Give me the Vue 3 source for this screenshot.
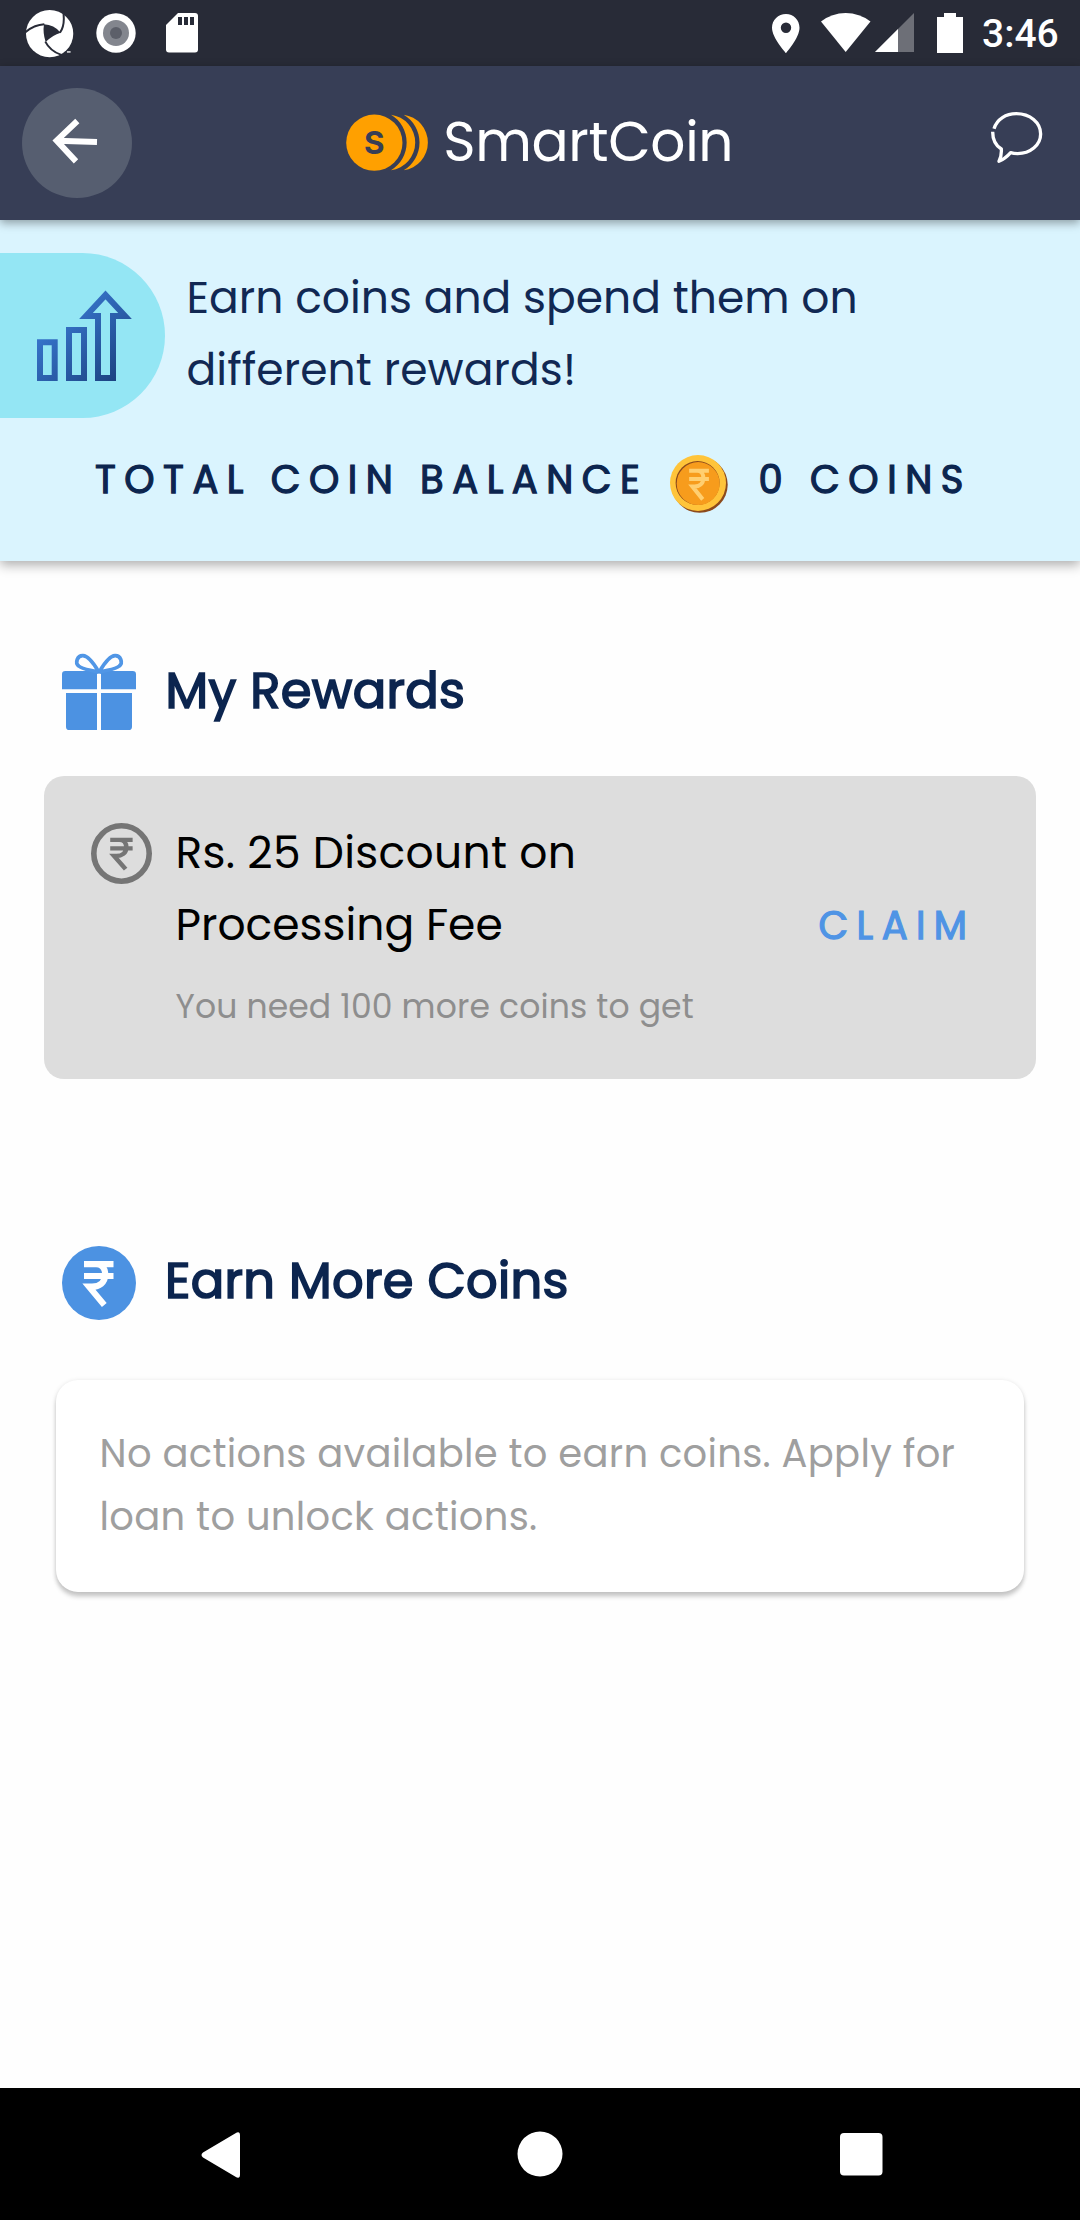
<script setup>
const rupee = 'M22 18.2H51.5M22 30H51.5M31 18.2H34C41 18.2 43.2 24 43.2 28.5C43.2 37 37 40.7 30 40.7H27L42.3 59'
</script>

<template>
  <div class="screen">
    <div class="status">
      <svg class="aperture" viewBox="78 29 143 143">
        <circle cx="149" cy="100" r="71" fill="#fff" />
        <path d="M132 72Q162 73 182 97Q158 104 137 125Q128 98 132 72Z" fill="#282b37" />
        <path d="M180 97Q196 76 190 34M133 72Q102 74 76 96M136 124Q150 152 184 164" fill="none" stroke="#282b37" stroke-width="6" />
        <path d="M201 155h11" stroke="#fff" stroke-width="4" />
      </svg>
      <svg class="record" viewBox="0 0 40 40">
        <circle cx="20" cy="20" r="19.7" fill="#fff" />
        <circle cx="20" cy="20" r="13" fill="#83868e" />
        <circle cx="20" cy="20" r="6" fill="#5c5f69" />
      </svg>
      <svg class="sd" viewBox="0 0 32 40">
        <path d="M12 0H29Q32 0 32 3V36.500Q32 39.500 29 39.500H3Q0 39.500 0 36.500V12Z" fill="#fff" />
        <path d="M12 4h4v8h-4zM18 4h4v8h-4zM24 4h4v8h-4z" fill="#282b37" />
      </svg>
      <span class="spacer"></span>
      <svg class="pin" viewBox="0 0 28 39">
        <path fill-rule="evenodd" d="M14 0C6.200 0 0 6.100 0 13.700C0 24 14 39 14 39S27.500 24 27.500 13.700C27.500 6.100 21.500 0 14 0ZM14 8.500a5.200 5.200 0 1 1 0 10.400a5.200 5.200 0 1 1 0-10.400Z" fill="#fff" />
      </svg>
      <svg class="wifi" viewBox="0 0 50 39">
        <path d="M0 8.500Q11 0 24.700 0T49.500 8.500L24.700 39Z" fill="#fff" />
      </svg>
      <svg class="signal" viewBox="0 0 39 39">
        <path d="M39 0V39H0Z" fill="#fff" opacity=".32" />
        <path d="M23 16V39H0Z" fill="#fff" />
      </svg>
      <svg class="battery" viewBox="0 0 26 40">
        <path d="M7 0H19V4H26V40H0V4H7Z" fill="#fff" />
      </svg>
      <span class="time">3:46</span>
    </div>

    <header class="bar">
      <div class="back">
        <svg viewBox="66 264 330 330">
          <path d="M291 426L172 422M232 363L170 422L228 484" fill="none" stroke="#fff" stroke-width="18" />
        </svg>
      </div>
      <svg class="logo" viewBox="49 103 249 172">
        <g fill="#ffa000">
          <circle cx="134" cy="189" r="84.500" />
          <path d="M184 105A84.300 84.300 0 0 1 184 272A97.700 97.700 0 0 0 184 105Z" />
          <path d="M222 105A84.300 84.300 0 0 1 222 272A97 97 0 0 0 222 105Z" />
        </g>
        <text x="134" y="222" class="logo-s">S</text>
      </svg>
      <span class="brand">SmartCoin</span>
      <svg class="chat" viewBox="750 333 160 160">
        <path d="M762 386C771 357 798 341 829 341C870 341 902 368 902 402C902 436 870 461 833 461C825 461 818 460 812 458C803 468 790 479 777 484C783 472 785 460 784 447C768 437 758 420 758 395" fill="none" stroke="#fff" stroke-width="10" stroke-linejoin="round" />
      </svg>
    </header>

    <section class="banner">
      <div class="promo">
        <div class="pill">
          <svg viewBox="0 253 165 165">
            <defs>
              <linearGradient id="growth" gradientUnits="userSpaceOnUse" x1="45" y1="315" x2="110" y2="385">
                <stop offset="0" stop-color="#3a7bd5" />
                <stop offset="1" stop-color="#1c4382" />
              </linearGradient>
            </defs>
            <path d="M40 342.200H54.700V378H40ZM69 330H84V378H69ZM98 316V378H113V316H125L105.500 295L86 316Z" fill="none" stroke="url(#growth)" stroke-width="6" />
          </svg>
        </div>
        <div class="promo-text">
          <div>Earn coins and spend them on</div>
          <div class="second">different rewards!</div>
        </div>
      </div>
      <div class="balance">
        <span class="label">TOTAL COIN BALANCE</span>
        <svg class="coin" viewBox="0 0 58 58">
          <circle cx="29.700" cy="29.800" r="28" fill="#8c4a1c" />
          <circle cx="28" cy="28" r="28" fill="#ffc43a" />
          <circle cx="27.600" cy="28" r="22" fill="#8c4a1c" />
          <circle cx="28.200" cy="28.600" r="21.500" fill="#f79c1c" />
          <path :d="rupee" transform="translate(4.400 3) scale(.67 .7)" fill="none" stroke="#ffcf70" stroke-width="6" />
        </svg>
        <span class="amount">0 COINS</span>
      </div>
    </section>

    <main>
      <div class="heading">
        <svg class="gift" viewBox="66 69 222 231">
          <g fill="#4c92e2">
            <path d="M66 178V133Q66 123 76 123H171V178ZM183 178V123H278Q288 123 288 133V178Z" />
            <path d="M78 189H171V300H88Q78 300 78 290ZM183 189H276V290Q276 300 266 300H183Z" />
            <path d="M165 121H189V131H165Z" />
          </g>
          <path d="M175 124C160 98 145 78 129 77C112 76 104 98 116 108C128 119 150 119 175 126M179 124C194 98 209 78 225 77C242 76 250 98 238 108C226 119 204 119 179 126" fill="none" stroke="#5096e6" stroke-width="11" />
        </svg>
        <h2>My Rewards</h2>
      </div>

      <div class="reward">
        <svg class="ring" viewBox="0 0 61 61">
          <circle cx="30.500" cy="30.500" r="27.700" fill="none" stroke="#757575" stroke-width="5.600" />
          <path :d="rupee" transform="translate(2.500 3.700) scale(.76 .72)" fill="none" stroke="#757575" stroke-width="6" />
        </svg>
        <div class="reward-text">
          <div class="title">Rs. 25 Discount on</div>
          <div>Processing Fee</div>
          <p>You need 100 more coins to get</p>
        </div>
        <span class="claim">CLAIM</span>
      </div>

      <div class="heading earn">
        <svg class="rupee" viewBox="0 0 74 74">
          <circle cx="37" cy="37" r="37" fill="#4c92e2" />
          <path :d="rupee" fill="none" stroke="#fff" stroke-width="6.200" />
        </svg>
        <h2>Earn More Coins</h2>
      </div>

      <div class="empty">
        <div>No actions available to earn coins. Apply for</div>
        <div>loan to unlock actions.</div>
      </div>
    </main>

    <nav class="nav">
      <svg viewBox="0 0 40 46"><path d="M34.500 1.200Q39 -1.500 39 3.500V42.500Q39 47.500 34.500 44.800L2 25.500Q-1 23 2 20.500Z" fill="#fff" /></svg>
      <svg viewBox="0 0 46 46"><circle cx="23" cy="23" r="22.500" fill="#fff" /></svg>
      <svg viewBox="0 0 43 43"><rect width="42.500" height="42.500" rx="4" fill="#fff" /></svg>
    </nav>
  </div>
</template>

<style>
body {
  margin: 0;
  background: #fefefe;
}
</style>

<style scoped>
.screen {
  width: 1080px;
  height: 2220px;
  display: flex;
  flex-direction: column;
  background: #fefefe;
  font-family: "Poppins", "Inter", sans-serif;
  white-space: nowrap;
  overflow: hidden;
}
svg {
  display: block;
  flex: none;
}
.status {
  height: 66px;
  flex: none;
  display: flex;
  align-items: flex-start;
  background: #282b37;
  box-sizing: border-box;
  padding: 10px 23px 0 26px;
}
.aperture { width: 47.600px; height: 47.600px; }
.record { width: 40px; height: 40px; margin: 3px 0 0 22.400px; }
.sd { width: 32px; height: 40px; margin: 3px 0 0 30px; }
.spacer { flex: 1; }
.pin { width: 28px; height: 39px; margin-top: 4px; }
.wifi { width: 50px; height: 39px; margin: 3px 0 0 21px; }
.signal { width: 39px; height: 39px; margin: 3px 0 0 4px; }
.battery { width: 26px; height: 40px; margin: 3px 0 0 23px; }
.time {
  margin-left: 19px;
  width: 75px;
  font: 500 39px/48px "Roboto", sans-serif;
  color: #fff;
}
.bar {
  position: relative;
  z-index: 1;
  height: 154px;
  flex: none;
  display: flex;
  align-items: flex-start;
  background: #373e56;
  box-shadow: 0 3px 9px rgba(0, 0, 0, .36);
}
.back {
  width: 110px;
  height: 110px;
  margin: 22px 0 0 22px;
  border-radius: 50%;
  background: #565e70;
}
.logo { width: 83px; height: 57.300px; margin: 48px 0 0 214.300px; }
.logo-s {
  font: 700 94px "Inter", sans-serif;
  fill: #373e56;
  text-anchor: middle;
}
.brand {
  width: 300px;
  margin: 45.500px 0 0 14px;
  font-size: 55px;
  line-height: 60px;
  letter-spacing: -.35px;
  color: #fff;
}
.chat { width: 53.300px; height: 53.300px; margin: 45px 0 0 246.700px; }
.banner {
  height: 341px;
  flex: none;
  background: #daf4fe;
  box-shadow: 0 4px 11px rgba(0, 0, 0, .32);
}
.promo {
  display: flex;
  padding-top: 33px;
}
.pill {
  width: 165px;
  height: 165px;
  border-radius: 0 83px 83px 0;
  background: #94e6f4;
}
.promo-text {
  padding: 8.600px 0 0 21.500px;
  height: 144px;
  font-size: 44px;
  line-height: 72px;
  color: #112853;
}
.second { letter-spacing: .08px; }
.balance {
  display: flex;
  padding: 31.500px 0 0 95px;
  font-size: 38.500px;
  line-height: 60px;
  color: #0c254f;
  -webkit-text-stroke: 1.250px #0c254f;
}
.label { width: 575px; letter-spacing: 8.500px; }
.coin { width: 58px; height: 58px; margin-top: 5.500px; }
.amount { margin-left: 30.500px; letter-spacing: 8.550px; }
.heading {
  display: flex;
  align-items: flex-start;
  margin-left: 62px;
  padding-top: 92px;
  height: 77px;
}
.gift { width: 74px; height: 77px; }
.rupee { width: 74px; height: 74px; }
h2 {
  margin: 7.700px 0 0 29.500px;
  font-size: 49.500px;
  font-weight: 400;
  line-height: 60px;
  letter-spacing: .35px;
  color: #0c254f;
  -webkit-text-stroke: 1.700px #0c254f;
}
.reward {
  display: flex;
  align-items: flex-start;
  width: 992px;
  height: 303px;
  margin: 46px 0 0 44px;
  border-radius: 20px;
  background: #ddd;
}
.ring { width: 61px; height: 61px; margin: 46.500px 0 0 46.500px; }
.reward-text {
  width: 600px;
  margin: 40.600px 0 0 24px;
  font-size: 44px;
  line-height: 72px;
  color: #000;
}
.title { letter-spacing: .28px; }
.reward-text p {
  margin: 21.800px 0 0;
  font-size: 33px;
  line-height: 50px;
  letter-spacing: .14px;
  color: #8e8e8e;
}
.claim {
  margin: 119.500px 0 0 43px;
  font-size: 38.500px;
  line-height: 60px;
  letter-spacing: 8.400px;
  color: #4f94e5;
  -webkit-text-stroke: 1.250px #4f94e5;
}
.earn { padding-top: 167px; height: 74px; }
.earn h2 { margin: 4.800px 0 0 29px; }
.empty {
  width: 968px;
  height: 212px;
  box-sizing: border-box;
  margin: 60px 0 0 56px;
  padding: 42px 0 0 43.600px;
  border-radius: 22px;
  background: #fff;
  box-shadow: 0 5px 4px rgba(0, 0, 0, .17), 0 1px 5px rgba(0, 0, 0, .13);
  font-size: 38.500px;
  line-height: 63px;
  letter-spacing: .29px;
  color: #9f9f9f;
}
main { flex: 1; }
.nav {
  height: 132px;
  flex: none;
  display: flex;
  align-items: flex-start;
  background: #000;
}
.nav svg:nth-child(1) { width: 40px; height: 46px; margin: 43.500px 0 0 201px; }
.nav svg:nth-child(2) { width: 46px; height: 46px; margin: 43px 0 0 275.500px; }
.nav svg:nth-child(3) { width: 43px; height: 43px; margin: 45px 0 0 277px; }
</style>
